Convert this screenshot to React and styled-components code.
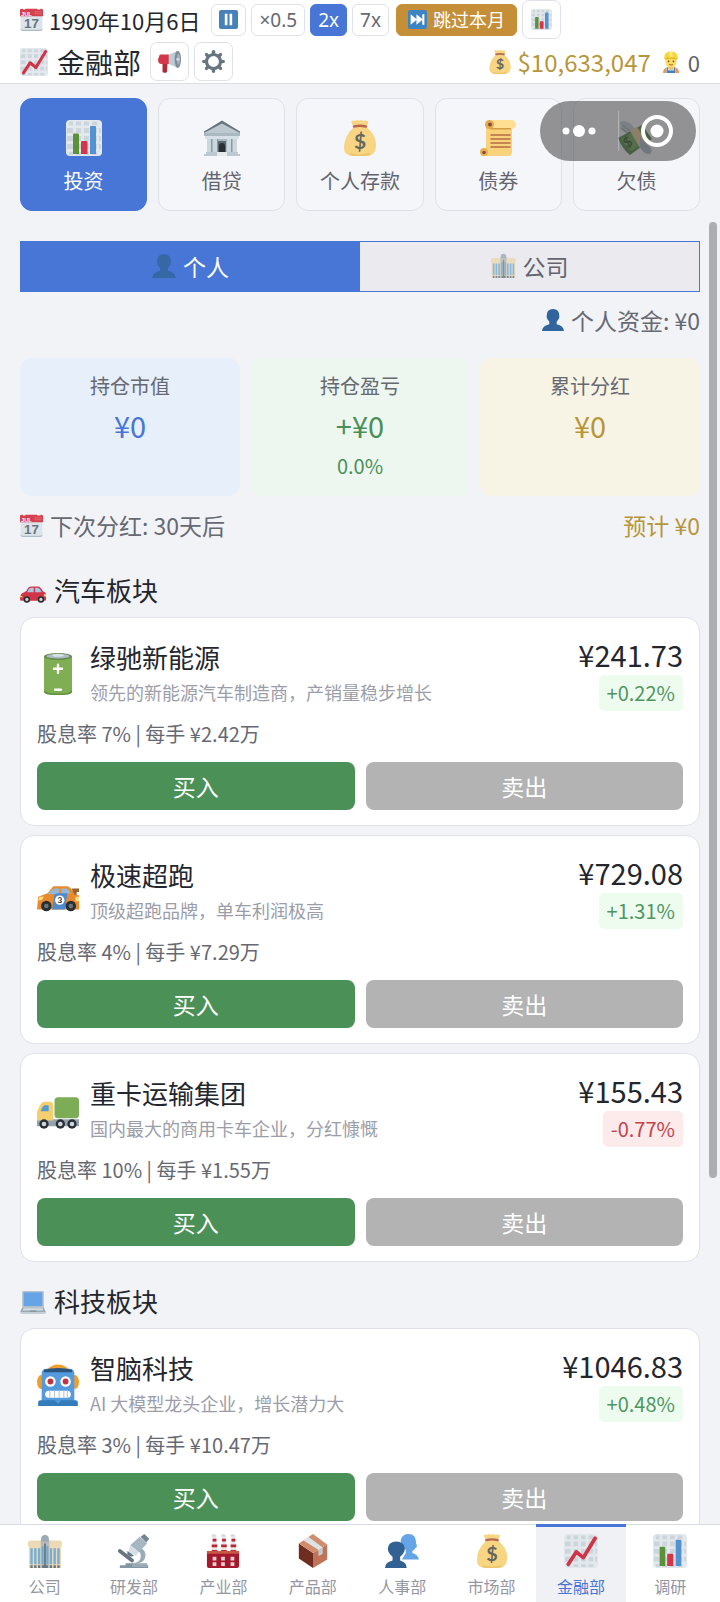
import { useState } from "react";
import styled, { createGlobalStyle, css } from "styled-components";

const GlobalStyle = createGlobalStyle`
  * {
    box-sizing: border-box;
  }
  body {
    margin: 0;
    background: #f2f3f7;
    color: #24262d;
  }
  body, button {
    font-family: "Noto Sans CJK SC", "Noto Sans", sans-serif;
  }
  button {
    margin: 0;
    padding: 0;
    cursor: pointer;
  }
  svg {
    display: block;
    flex: none;
  }
`;

const Page = styled.div`
  position: relative;
  height: 100vh;
  display: flex;
  flex-direction: column;
  overflow: hidden;
`;

/* header */

const Header = styled.header`
  flex: none;
  display: flex;
  flex-direction: column;
  gap: 3px;
  padding: 0 20px 2px;
  background: white;
  border-bottom: 1px solid #dcdee6;
`;

const HeaderRow = styled.div`
  display: flex;
  align-items: center;
  height: 39px;
  gap: 5px;
`;

const DateText = styled.div`
  display: flex;
  align-items: center;
  gap: 6px;
  margin-right: 6px;
  font-size: 22px;
  line-height: 30px;
  white-space: nowrap;
`;

const SpeedButton = styled.button`
  display: flex;
  align-items: center;
  justify-content: center;
  height: 32px;
  padding: 0 7px;
  border: 1px solid ${(p) => (p.$active ? "#4876d6" : "#dfe1ec")};
  border-radius: 6px;
  background: ${(p) => (p.$active ? "#4876d6" : "white")};
  color: ${(p) => (p.$active ? "white" : "#666872")};
  font-family: "Noto Sans", "Noto Sans CJK SC", sans-serif;
  font-size: 19px;
  line-height: 28px;
`;

const SkipButton = styled(SpeedButton)`
  gap: 6px;
  margin-left: 2px;
  padding: 0 11px;
  border-color: #c58f38;
  background: #c58f38;
  color: white;
  font-size: 18px;
`;

const SquareButton = styled.button`
  display: flex;
  align-items: center;
  justify-content: center;
  width: 39px;
  height: 39px;
  border: 1px solid #dfe1ec;
  border-radius: 7px;
  background: white;
`;

const PageTitle = styled.h1`
  display: flex;
  align-items: center;
  gap: 9px;
  margin: 0 4px 0 0;
  font-size: 28px;
  font-weight: 400;
  line-height: 38px;
`;

const Money = styled.div`
  display: flex;
  align-items: center;
  gap: 6px;
  margin-left: auto;
  color: #b7963a;
  font-size: 24px;
  line-height: 36px;
`;

const Staff = styled.div`
  display: flex;
  align-items: center;
  gap: 6px;
  margin-left: 4px;
  color: #5d5f69;
  font-size: 22px;
  line-height: 36px;
`;

/* content */

const Main = styled.main`
  flex: 1;
  min-height: 0;
  overflow-y: auto;
  scrollbar-width: none;
  padding: 14px 20px;
`;

const Tabs = styled.div`
  display: grid;
  grid-template-columns: repeat(5, 1fr);
  gap: 11px;
`;

const Tab = styled.button`
  display: flex;
  flex-direction: column;
  align-items: center;
  gap: 12px;
  padding: 21px 0 16px;
  border: 1px solid ${(p) => (p.$active ? "#4876d6" : "#e0e1e8")};
  border-radius: 12px;
  background: ${(p) => (p.$active ? "#4876d6" : "#f5f6fa")};
  color: ${(p) => (p.$active ? "white" : "#62646f")};
  font-size: 20px;
  line-height: 26px;
`;

const Segments = styled.div`
  display: grid;
  grid-template-columns: 1fr 1fr;
  height: 51px;
  margin-top: 30px;
  border: 1px solid #4876d6;
`;

const Segment = styled.button`
  display: flex;
  align-items: center;
  justify-content: center;
  gap: 7px;
  padding-bottom: 2px;
  border: none;
  background: ${(p) => (p.$active ? "#4876d6" : "#ebebef")};
  color: ${(p) => (p.$active ? "white" : "#62646f")};
  font-size: 23px;
  line-height: 32px;

  svg {
    opacity: 0.8;
  }
`;

const InfoLine = styled.div`
  display: flex;
  justify-content: space-between;
  color: #666872;
  font-size: 23px;
  line-height: 30px;

  span {
    display: flex;
    align-items: center;
    gap: 7px;
  }
`;

const FundLine = styled(InfoLine)`
  justify-content: flex-end;
  margin: 13px 0 23px;
`;

const DividendLine = styled(InfoLine)`
  margin: 14px 0 32px;
`;

const Expected = styled.strong`
  color: #b7963a;
  font-weight: 400;
`;

const Summary = styled.div`
  display: grid;
  grid-template-columns: repeat(3, 1fr);
  gap: 10px;
`;

const tones = {
  blue: css`
    background: #e7effb;
    color: #4876d6;
  `,
  green: css`
    background: #edf7ef;
    color: #4a9056;
  `,
  gold: css`
    background: #f8f4e5;
    color: #b7963a;
  `,
};

const SummaryCard = styled.div`
  display: flex;
  flex-direction: column;
  align-items: center;
  padding: 14px 10px 16px;
  border-radius: 12px;
  ${(p) => tones[p.$tone]}
`;

const SummaryLabel = styled.div`
  color: #666872;
  font-size: 20px;
  line-height: 28px;
`;

const SummaryValue = styled.div`
  margin: 5px 0 7px;
  font-size: 29px;
  line-height: 40px;
`;

const SummaryRate = styled.div`
  font-size: 20px;
  line-height: 28px;
`;

const SectionTitle = styled.h2`
  display: flex;
  align-items: center;
  gap: 8px;
  margin: 21px 0 9px;
  font-size: 26px;
  font-weight: 400;
  line-height: 36px;
`;

const StockList = styled.div`
  display: flex;
  flex-direction: column;
  gap: 9px;
`;

const StockCard = styled.article`
  padding: 18px 16px 15px;
  border: 1px solid #e0e1e9;
  border-radius: 14px;
  background: white;
`;

const StockHead = styled.div`
  display: flex;
  align-items: center;
  gap: 11px;
`;

const StockText = styled.div`
  flex: 1;
  align-self: flex-start;
`;

const StockName = styled.h3`
  margin: 0;
  font-size: 26px;
  font-weight: 400;
  line-height: 42px;
`;

const StockDesc = styled.p`
  margin: 0;
  color: #9b9da9;
  font-size: 18px;
  line-height: 28px;
`;

const StockQuote = styled.div`
  display: flex;
  flex-direction: column;
  align-items: flex-end;
  gap: 3px;
`;

const Price = styled.div`
  font-size: 29px;
  line-height: 36px;
`;

const Change = styled.div`
  padding: 0 8px;
  border-radius: 5px;
  background: ${(p) => (p.$down ? "#fdebeb" : "#eefcf0")};
  color: ${(p) => (p.$down ? "#c4434b" : "#4f9660")};
  font-size: 20px;
  line-height: 36px;
`;

const StockMeta = styled.div`
  margin: 9px 0 14px;
  color: #666872;
  font-size: 20px;
  line-height: 28px;
`;

const Actions = styled.div`
  display: grid;
  grid-template-columns: 1fr 1fr;
  gap: 11px;
`;

const ActionButton = styled.button`
  height: 48px;
  border: none;
  border-radius: 8px;
  background: #4b9056;
  color: white;
  font-size: 23px;
  line-height: 32px;

  &:disabled {
    background: #b3b3b3;
    cursor: default;
  }
`;

/* bottom navigation */

const BottomNav = styled.nav`
  flex: none;
  display: grid;
  grid-template-columns: repeat(8, 1fr);
  height: 78px;
  padding-right: 5px;
  background: white;
  border-top: 1px solid #d9dbe2;
`;

const NavLink = styled.a`
  display: flex;
  flex-direction: column;
  align-items: center;
  gap: 8px;
  padding-top: 9px;
  background: ${(p) => (p.$active ? "#f0f1f5" : "white")};
  box-shadow: ${(p) => (p.$active ? "inset 0 2px #4876d6, 0 -1px #4876d6" : "none")};
  color: ${(p) => (p.$active ? "#4876d6" : "#9496a3")};
  font-size: 16px;
  line-height: 20px;
  text-decoration: none;
`;

/* things that float over the page */

const Capsule = styled.div`
  position: absolute;
  top: 101px;
  right: 24px;
  display: flex;
  align-items: center;
  width: 156px;
  height: 60px;
  border-radius: 30px;
  background: rgba(70, 70, 72, 0.57);
`;

const CapsuleButton = styled.button`
  flex: 1;
  display: flex;
  align-items: center;
  justify-content: center;
  height: 40px;
  border: none;
  background: none;

  & + & {
    border-left: 1px solid rgba(255, 255, 255, 0.3);
  }
`;

const ScrollThumb = styled.div`
  position: absolute;
  top: 222px;
  right: 3px;
  width: 8px;
  height: 956px;
  border-radius: 4px;
  background: #adaeb2;
`;

/* icons, all on a 36x36 grid */

const Grid = () => (
  <>
    <rect width="36" height="36" rx="4" fill="#e3e8ec" />
    <path
      d="M3 1.5h4v4H3zM10 1.5h5v4h-5zM18 1.5h5v4h-5zM26 1.5h5v4h-5zM1 8h6v5H1zM10 8h5v5h-5zM18 8h5v5h-5zM26 8h5v5h-5zM1 16h6v5H1zM10 16h5v5h-5zM18 16h5v5h-5zM26 16h5v5h-5zM1 24h6v5H1zM10 24h5v5h-5zM18 24h5v5h-5zM26 24h5v5h-5zM33 8h2v5h-2zM33 16h2v5h-2zM33 24h2v5h-2zM3 32h4v3H3zM10 32h5v3h-5zM18 32h5v3h-5zM26 32h5v3h-5z"
      fill="#ccd5dc"
    />
  </>
);

const icons = {
  bars: (
    <>
      <Grid />
      <path d="M7 14.500q0-1 1-1h4q1 0 1 1V34H7z" fill="#5c913b" />
      <path d="M15 22q0-1 1-1h4.500q1 0 1 1v12H15z" fill="#d2364b" />
      <path d="M24 7q0-1 1-1h4q1 0 1 1v27h-6z" fill="#5292d0" />
    </>
  ),
  trend: (
    <>
      <Grid />
      <path d="M4.500 32 13 19l7.500 6L33 4.500" fill="none" stroke="#cf3548" strokeWidth="4" strokeLinecap="round" strokeLinejoin="round" />
    </>
  ),
  calendar: (
    <>
      <path d="M1 9h34v23q0 4-4 4H5q-4 0-4-4z" fill="#dce4ea" />
      <path d="M1 34q2 2 4 2h26q3 0 4-2v-2q-1 2-4 2H5q-3 0-4-2z" fill="#aebbc5" />
      <path d="M0 3q0-2 3-2h1.500v1.500h4V1H27v1.500h5V1h1q3 0 3 2v10H0z" fill="#d4404c" />
      <path d="M23 6h11M23 9h11" stroke="#ef929b" strokeWidth="1.500" strokeDasharray="1.500 1.500" />
      <text x="10" y="12" fontSize="9" fontWeight="700" textAnchor="middle" fill="white" fontFamily="Liberation Sans, sans-serif">JUL</text>
      <text x="18" y="32" fontSize="21" fontWeight="700" textAnchor="middle" fill="#66757f" fontFamily="Liberation Sans, sans-serif">17</text>
    </>
  ),
  pause: (
    <>
      <rect width="36" height="36" rx="4" fill="#4682b9" />
      <path d="M11 7h5v22h-5zM20 7h5v22h-5z" fill="white" />
    </>
  ),
  skip: (
    <>
      <rect width="36" height="36" rx="4" fill="#3c84c4" />
      <path d="m5 8 11 9V8l11 9V8h4v20h-4v-9l-11 9v-9L5 28z" fill="white" />
    </>
  ),
  megaphone: (
    <>
      <path d="M7 19h8l-1 16q-6 2-7-1z" fill="#b02a3b" />
      <path d="M2 9q0-2 3-2h12v15H5q-5 0-5-7z" fill="#d23849" />
      <path d="M17 7 31 1v27l-14-6z" fill="#bfcbd3" />
      <ellipse cx="31" cy="14.500" rx="5" ry="13.500" fill="#7b8b97" />
      <ellipse cx="32" cy="14.500" rx="2.500" ry="9" fill="#a4b1bb" />
      <circle cx="31" cy="14.500" r="2.500" fill="#cfd8de" />
    </>
  ),
  gear: (
    <g fill="#66757f">
      {[0, 45, 90, 135, 180, 225, 270, 315].map((a) => (
        <path key={a} d="M15 8 15.500 2q.500-2 2.500-2t2.500 2L21 8z" transform={`rotate(${a} 18 18)`} />
      ))}
      <circle cx="18" cy="18" r="11" fill="none" stroke="#66757f" strokeWidth="5" />
    </g>
  ),
  moneybag: (
    <>
      <path d="M12 7Q9 3 9.500 1q2-1 3.500 0 2-2 4 0 2-2 4 0 3-1 5 0 1 2-2 6 11 8 10 20-1 9-10 9H12Q2 36 2 28 2 16 12 7z" fill="#f7d582" />
      <path d="M12 6.500q6-1.500 12 0" stroke="#b96650" strokeWidth="2.500" fill="none" strokeLinecap="round" />
      <path d="M8 34q8 3 20 0" stroke="#ecc56d" strokeWidth="2" fill="none" />
      <text x="18" y="29" fontSize="21" fontWeight="700" textAnchor="middle" fill="#66665f" fontFamily="Lato, sans-serif">$</text>
    </>
  ),
  worker: (
    <>
      <path d="M5 36q0-9 8-9h10q8 0 8 9z" fill="#ef9650" />
      <path d="M10 28h16v8H10z" fill="#d5dfe5" />
      <path d="M13 27v5h10v-5h2v9H11v-9z" fill="#4682b9" />
      <path d="M14 23h8v6q-4 3-8 0z" fill="#eebd57" />
      <path d="M9 11h18v6q0 10-9 10T9 17z" fill="#fbdb67" />
      <path d="M7 13Q6 1 18 1t11 12q-11-3-22 0z" fill="#f7d640" />
      <path d="M15.500 1h5v9h-5z" fill="#ffe97c" />
      <path d="M8 13q10-3 20 0" stroke="#e9b61a" strokeWidth="2" fill="none" />
      <circle cx="14" cy="17" r="1.300" fill="#664500" />
      <circle cx="22" cy="17" r="1.300" fill="#664500" />
      <path d="M15 22q3 2 6 0" stroke="#a9531c" strokeWidth="1.500" fill="none" />
    </>
  ),
  bank: (
    <>
      <path d="M3 18h30v14H3z" fill="#aab8c2" />
      <path d="M14 21h8v11h-8z" fill="#5c6870" />
      <path d="M15 32v-6q0-3 3-3t3 3v6z" fill="#292f33" />
      <path d="M3 18h4v14H3zM9 18h4v14H9zM23 18h4v14h-4zM29 18h4v14h-4z" fill="#ccd6dd" />
      <path d="M7 18h1v14H7zM13 18h1v14h-1zM27 18h1v14h-1z" fill="#8b99a4" />
      <path d="M1 12 18 2l17 10v3H1z" fill="#bdc8d0" />
      <path d="m0 11.500 18-11 18 11V13L18 3.500 0 13z" fill="#66757f" />
      <path d="M0 13h36v3H0z" fill="#aab8c2" />
      <path d="M1 16h34v3H1z" fill="#d7e0e6" />
      <path d="M2 32h11v2H2zM23 32h11v2H23zM0 34h13v2H0zM23 34h13v2H23z" fill="#bdc8d0" />
      <path d="M13 32h10v4H13z" fill="#e5eaee" />
    </>
  ),
  scroll: (
    <>
      <path d="M6 4h26v28q0 4-4 4H4V30h2z" fill="#f9d37c" />
      <path d="M9 0h23q4 1 4 4.500T32 9H9z" fill="#ffdf91" />
      <path d="M10 8h21v1.500H10z" fill="#d89b45" />
      <circle cx="9.500" cy="4.500" r="4.500" fill="#e8a94e" />
      <circle cx="10" cy="4.500" r="2" fill="#84503d" />
      <circle cx="4" cy="32" r="4" fill="#e8b052" />
      <circle cx="4" cy="32.500" r="1.800" fill="#84503d" />
      <path d="M11 15h19M11 19h19M11 23h19M11 27h19" stroke="#b56b42" strokeWidth="1.500" strokeLinecap="round" />
    </>
  ),
  flyingMoney: (
    <>
      <path d="M2 2q5-3 11 2l10 12-5 4Q10 14 3 10z" fill="#bfcbd4" />
      <path d="m4 5 15 11M3 8l14 10" stroke="#8b9ba7" />
      <path d="M0 18 24 5l10 14-22 16q-7-5-12-17z" fill="#4e8140" />
      <path d="m3 19 20-11 8 11-18 12q-6-5-10-12z" fill="#69a353" />
      <path d="m12 11 7-4 10 16-7 5z" fill="#ebc795" />
      <text x="10" y="27" fontSize="14" fontWeight="700" textAnchor="middle" fill="#2e5427" transform="rotate(-30 10 23)" fontFamily="Lato, sans-serif">$</text>
      <path d="m22 18 10 9q3 4 0 7-6 1-10-7z" fill="#a8b6c2" />
    </>
  ),
  person: (
    <path d="M12 25v-4q-4-4-4.500-8Q7 0 18 0t10.500 13q-.5 4-4.500 8v4q11 2 12 11H0q1-9 12-11z" fill="#32659b" />
  ),
  people: (
    <>
      <path d="M22 20v-3q-7-7-5-12 2-5 8-5 8 0 8 10 2 4-1 5-1 2-3 3v2q6 2 7 7H18z" fill="#65a5e7" />
      <path d="M8 28v-4q-5-4-5-9 1-7 9-7t9 7q0 5-5 9v4q7 2 7 8H0q0-6 8-8z" fill="#326293" />
    </>
  ),
  office: (
    <>
      <path d="M0 10q0-3 3-3h12v29H1V14q-1-1-1-4zM21 7h12q3 0 3 3 0 3-1 4v22H21z" fill="#ecd9b5" />
      <path d="M2.500 15H5v17H2.500zM6.500 15H9v17H6.500zM10.500 15H13v17h-2.500zM23 15h2.500v17H23zM27 15h2.500v17H27zM31 15h2.500v17H31z" fill="#75add4" />
      <path d="M13.500 7q0-2 2-2h5q2 0 2 2v29h-9z" fill="#b8bbb8" />
      <path d="M14 5q0-4 4-4t4 4v3h-8z" fill="#9aabb5" />
      <path d="M14.500 13h2v19h-2zM19.500 13h2v19h-2z" fill="#75a7c9" />
      <path d="M17 10h2v26h-2z" fill="#617e92" />
      <path d="M2.500 33H5v3H2.500zM6.500 33H9v3H6.500zM10.500 33H13v3h-2.500zM15 33h6v3h-6zM23 33h2.500v3H23zM27 33h2.500v3H27zM31 33h2.500v3H31z" fill="#66757f" />
    </>
  ),
  car: (
    <>
      <path d="M9 19q2-6 7-6h9q3 0 7 7 4 1 4 5v6q0 2-2 2H2q-2 0-2-3 0-8 6-9z" fill="#d23448" />
      <path d="M10 21q2-6 6-6h3v6zM21 15h4q3 1 5 6h-9z" fill="#a9c7e1" />
      <path d="M0 26q3 0 4 2H0zM33 24h3v3h-3z" fill="#f4d47d" />
      <circle cx="9.500" cy="31" r="4.500" fill="#292f33" />
      <circle cx="29" cy="31" r="4.500" fill="#292f33" />
      <circle cx="9.500" cy="31" r="2.200" fill="#ccd6dd" />
      <circle cx="29" cy="31" r="2.200" fill="#ccd6dd" />
    </>
  ),
  laptop: (
    <>
      <path d="M3 6q0-2 2-2h26q2 0 2 2v21H3z" fill="#b7c2ca" />
      <path d="M5 6h26v19H5z" fill="#65a5e7" />
      <path d="M3 27h30l3 7H0z" fill="#9aaab4" />
      <path d="M5 28h26l1.500 3h-29z" fill="#d4dce1" />
      <path d="M14 31h8l1 2H13z" fill="#7f909b" />
      <path d="M0 34h36q0 2-3 2H3q-3 0-3-2z" fill="#c3ced5" />
    </>
  ),
  battery: (
    <>
      <path d="M6 3v30q0 3 12 3t12-3V3z" fill="#7fae55" />
      <path d="M6 32v1q0 3 12 3t12-3v-1q-2 3-12 3T6 32z" fill="#5c913b" />
      <ellipse cx="18" cy="3" rx="12" ry="3" fill="#628b48" />
      <ellipse cx="18" cy="2.700" rx="10" ry="2" fill="#aebbc4" />
      <ellipse cx="18" cy="2" rx="5" ry="1.300" fill="#d8e0e5" />
      <path d="M18 10v7M14.500 13.500h7M15.500 31.500h5" stroke="white" strokeWidth="2" strokeLinecap="round" />
    </>
  ),
  raceCar: (
    <>
      <path d="M30 15h6v3h-2v4h-3z" fill="#97622e" />
      <path d="M1 22 9 19l5-6h12q4 1 6 7l4 1v12H0z" fill="#e98b2c" />
      <path d="M9 20q4-5 7-5h3v5zM21 15h5l3 4-8 1z" fill="#94b9d8" />
      <path d="m15 20 3-1h8l-2 14H13z" fill="#4b8bce" />
      <path d="M2 22h4l-2 3H1zM33 22h3v4h-3z" fill="#f8df8a" />
      <circle cx="19.500" cy="25" r="4" fill="white" />
      <text x="19.500" y="27.500" fontSize="7" fontWeight="700" textAnchor="middle" fill="#292f33" fontFamily="Lato, sans-serif">3</text>
      <circle cx="8" cy="30" r="4.500" fill="#292f33" />
      <circle cx="29" cy="30" r="4.500" fill="#292f33" />
      <circle cx="8" cy="30" r="2" fill="#66757f" />
      <circle cx="29" cy="30" r="2" fill="#66757f" />
    </>
  ),
  truck: (
    <>
      <path d="M0 26h36v6H0z" fill="#93a2af" />
      <path d="M0 27v-7q3-9 6-9h5q3 0 3 3v13z" fill="#f4cf70" />
      <path d="M3 19q2-5 4-5h3v5z" fill="#569bd0" />
      <rect x="15" y="7" width="21" height="18" rx="3" fill="#7dac56" />
      <circle cx="6" cy="30" r="4" fill="#292f33" />
      <circle cx="20" cy="30" r="4" fill="#292f33" />
      <circle cx="30" cy="30" r="4" fill="#292f33" />
      <circle cx="6" cy="30" r="2" fill="#ccd6dd" />
      <circle cx="20" cy="30" r="2" fill="#ccd6dd" />
      <circle cx="30" cy="30" r="2" fill="#ccd6dd" />
    </>
  ),
  robot: (
    <>
      <path d="M8 5q10-9 20 0z" fill="#ef9f2f" />
      <ellipse cx="3.500" cy="15.500" rx="3.500" ry="6" fill="#ef9f2f" />
      <ellipse cx="32.500" cy="15.500" rx="3.500" ry="6" fill="#ef9f2f" />
      <path d="M4 8q0-4 4-4h20q4 0 4 4v24H4z" fill="#559adc" />
      <path d="M6 5q12-3 24 0v2H6z" fill="#2c557c" />
      <circle cx="11.500" cy="15" r="4.500" fill="white" />
      <circle cx="24.500" cy="15" r="4.500" fill="white" />
      <circle cx="11.500" cy="15" r="2.500" fill="#be3443" />
      <circle cx="24.500" cy="15" r="2.500" fill="#be3443" />
      <rect x="7" y="23" width="22" height="6" rx="3" fill="white" />
      <path d="M11 23v6M15 23v6M19 23v6M23 23v6M26 23v6" stroke="#bdcad5" />
      <path d="M3 31h30q2 0 2 2v3H1v-3q0-2 2-2z" fill="#347bb9" />
      <path d="M15 31h6l-3 3z" fill="#559adc" />
    </>
  ),
  microscope: (
    <>
      <path d="M3 33h6v-2h12v2h12v3H3z" fill="#8496a2" />
      <path d="M24 14q7 3 6 10-1 6-8 7h10v4H16v-4q8 0 9-6 1-5-3-7z" fill="#9aabb6" />
      <path d="M3 18 16 28" stroke="#66757f" strokeWidth="4" strokeLinecap="round" />
      <path d="M14 12 24 3l8 7-9 9z" fill="#a7b7c2" />
      <path d="m14 12 9 7-3 4-8-4z" fill="#d5dfe5" />
      <path d="m11 18 7 5-3 1-4-2z" fill="#66757f" />
      <path d="m25 3 4-3 5 5-3 4z" fill="#708693" />
    </>
  ),
  factory: (
    <>
      <path d="M7 3h4l1 17H6zM17 3h4l1 17h-6zM27 3h4l1 17h-6z" fill="#ece4e4" />
      <path d="M7 5h4v3H7zM6 11h6v3H6zM17 5h4v3h-4zM16 11h6v3h-6zM27 5h4v3h-4zM26 11h6v3h-6zM6 17h6v3H6zM16 17h6v3h-6zM26 17h6v3h-6z" fill="#b92736" />
      <path d="M6 3q-1-2 2-3 4 1 3 3zM16 3q-1-2 2-3 4 1 3 3zM26 3q-1-2 2-3 4 1 3 3z" fill="#d4dbe0" />
      <path d="M1 19h34v15q0 2-2 2H3q-2 0-2-2z" fill="#a5172b" />
      <path d="M1 18h34v3H1z" fill="#c75a44" />
      <path d="M7 24h4v4H7zM16 24h4v4h-4zM26 24h4v4h-4zM7 30h4v4H7zM16 30h4v4h-4zM26 30h4v4h-4z" fill="#e6cfd2" />
    </>
  ),
  box: (
    <>
      <path d="m3 10 15 10v16L3 26z" fill="#6f2c20" />
      <path d="m18 20 15-9v16L18 36z" fill="#bf7357" />
      <path d="M3 10 18 0l15 11-15 9z" fill="#d18c6b" />
      <path d="m8 7 5-4 15 11v7l-4 2v-6z" fill="#dce3e7" />
      <path d="m24 17 4-3v7l-4 2z" fill="#c0cbd1" />
    </>
  ),
};

const Icon = ({ name, size }) => (
  <svg width={size} height={size} viewBox="0 0 36 36" aria-hidden="true">
    {icons[name]}
  </svg>
);

const tabs = [
  ["bars", "投资"],
  ["bank", "借贷"],
  ["moneybag", "个人存款"],
  ["scroll", "债券"],
  ["flyingMoney", "欠债"],
];

const sections = [
  {
    icon: "car",
    title: "汽车板块",
    stocks: [
      { icon: "battery", name: "绿驰新能源", desc: "领先的新能源汽车制造商，产销量稳步增长", price: "241.73", change: "+0.22%", rate: 7, lot: "2.42" },
      { icon: "raceCar", name: "极速超跑", desc: "顶级超跑品牌，单车利润极高", price: "729.08", change: "+1.31%", rate: 4, lot: "7.29" },
      { icon: "truck", name: "重卡运输集团", desc: "国内最大的商用卡车企业，分红慷慨", price: "155.43", change: "-0.77%", rate: 10, lot: "1.55" },
    ],
  },
  {
    icon: "laptop",
    title: "科技板块",
    stocks: [
      { icon: "robot", name: "智脑科技", desc: "AI 大模型龙头企业，增长潜力大", price: "1046.83", change: "+0.48%", rate: 3, lot: "10.47" },
    ],
  },
];

const navItems = [
  ["office", "公司"],
  ["microscope", "研发部"],
  ["factory", "产业部"],
  ["box", "产品部"],
  ["people", "人事部"],
  ["moneybag", "市场部"],
  ["trend", "金融部"],
  ["bars", "调研"],
];

const Stock = ({ stock }) => (
  <StockCard>
    <StockHead>
      <Icon name={stock.icon} size={42} />
      <StockText>
        <StockName>{stock.name}</StockName>
        <StockDesc>{stock.desc}</StockDesc>
      </StockText>
      <StockQuote>
        <Price>¥{stock.price}</Price>
        <Change $down={stock.change.startsWith("-")}>{stock.change}</Change>
      </StockQuote>
    </StockHead>
    <StockMeta>
      股息率 {stock.rate}% | 每手 ¥{stock.lot}万
    </StockMeta>
    <Actions>
      <ActionButton>买入</ActionButton>
      <ActionButton disabled>卖出</ActionButton>
    </Actions>
  </StockCard>
);

export default function App() {
  const [speed, setSpeed] = useState("2x");
  const [tab, setTab] = useState("投资");
  const [owner, setOwner] = useState("个人");

  return (
    <Page>
      <GlobalStyle />
      <Header>
        <HeaderRow>
          <DateText>
            <Icon name="calendar" size={23} />
            1990年10月6日
          </DateText>
          <SpeedButton aria-label="暂停">
            <Icon name="pause" size={19} />
          </SpeedButton>
          {["×0.5", "2x", "7x"].map((s) => (
            <SpeedButton key={s} $active={s === speed} onClick={() => setSpeed(s)}>
              {s}
            </SpeedButton>
          ))}
          <SkipButton>
            <Icon name="skip" size={19} />
            跳过本月
          </SkipButton>
          <SquareButton aria-label="统计">
            <Icon name="bars" size={21} />
          </SquareButton>
        </HeaderRow>
        <HeaderRow>
          <PageTitle>
            <Icon name="trend" size={28} />
            金融部
          </PageTitle>
          <SquareButton aria-label="公告">
            <Icon name="megaphone" size={23} />
          </SquareButton>
          <SquareButton aria-label="设置">
            <Icon name="gear" size={23} />
          </SquareButton>
          <Money>
            <Icon name="moneybag" size={24} />
            $10,633,047
          </Money>
          <Staff>
            <Icon name="worker" size={22} />0
          </Staff>
        </HeaderRow>
      </Header>

      <Main>
        <Tabs>
          {tabs.map(([icon, label]) => (
            <Tab key={label} $active={label === tab} onClick={() => setTab(label)}>
              <Icon name={icon} size={36} />
              {label}
            </Tab>
          ))}
        </Tabs>

        <Segments>
          <Segment $active={owner === "个人"} onClick={() => setOwner("个人")}>
            <Icon name="person" size={24} />
            个人
          </Segment>
          <Segment $active={owner === "公司"} onClick={() => setOwner("公司")}>
            <Icon name="office" size={25} />
            公司
          </Segment>
        </Segments>

        <FundLine>
          <span>
            <Icon name="person" size={22} />
            个人资金: ¥0
          </span>
        </FundLine>

        <Summary>
          <SummaryCard $tone="blue">
            <SummaryLabel>持仓市值</SummaryLabel>
            <SummaryValue>¥0</SummaryValue>
          </SummaryCard>
          <SummaryCard $tone="green">
            <SummaryLabel>持仓盈亏</SummaryLabel>
            <SummaryValue>+¥0</SummaryValue>
            <SummaryRate>0.0%</SummaryRate>
          </SummaryCard>
          <SummaryCard $tone="gold">
            <SummaryLabel>累计分红</SummaryLabel>
            <SummaryValue>¥0</SummaryValue>
          </SummaryCard>
        </Summary>

        <DividendLine>
          <span>
            <Icon name="calendar" size={23} />
            下次分红: 30天后
          </span>
          <Expected>预计 ¥0</Expected>
        </DividendLine>

        {sections.map((section) => (
          <section key={section.title}>
            <SectionTitle>
              <Icon name={section.icon} size={26} />
              {section.title}
            </SectionTitle>
            <StockList>
              {section.stocks.map((stock) => (
                <Stock key={stock.name} stock={stock} />
              ))}
            </StockList>
          </section>
        ))}
      </Main>

      <BottomNav>
        {navItems.map(([icon, label]) => (
          <NavLink key={label} href="#" $active={label === "金融部"}>
            <Icon name={icon} size={34} />
            {label}
          </NavLink>
        ))}
      </BottomNav>

      <ScrollThumb />
      <Capsule>
        <CapsuleButton aria-label="更多">
          <svg width="34" height="14" viewBox="0 0 34 14" fill="white">
            <circle cx="4" cy="7" r="3.500" />
            <circle cx="17" cy="7" r="6" />
            <circle cx="30" cy="7" r="3.500" />
          </svg>
        </CapsuleButton>
        <CapsuleButton aria-label="关闭">
          <svg width="32" height="32" viewBox="0 0 32 32">
            <circle cx="16" cy="16" r="14" fill="none" stroke="white" strokeWidth="4" />
            <circle cx="16" cy="16" r="6.500" fill="white" />
          </svg>
        </CapsuleButton>
      </Capsule>
    </Page>
  );
}
